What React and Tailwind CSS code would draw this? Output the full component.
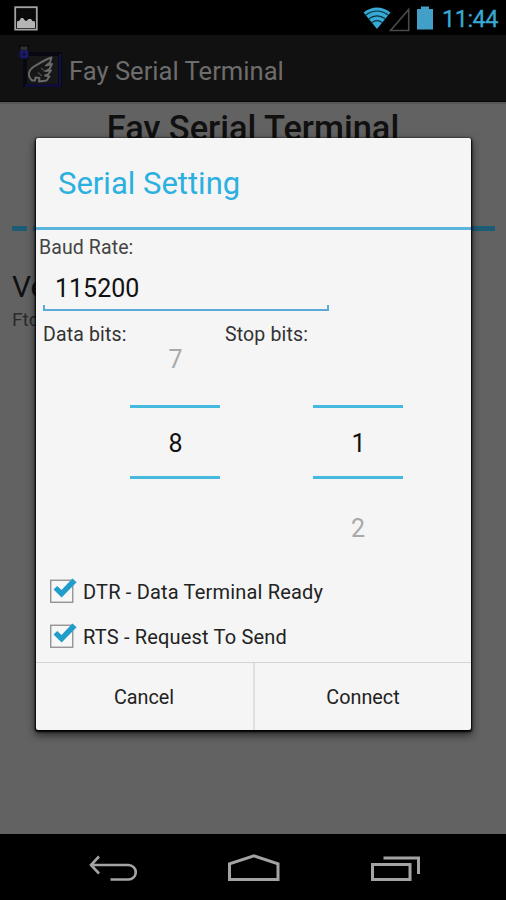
import React, { useState } from "react";

const StatusBar = () => (
  <div className="flex h-[35px] items-center justify-between bg-black pl-[14px] pr-2">
    {/* Picture notification */}
    <svg width="24" height="25" viewBox="0 0 24 25" className="mt-0.5">
      <rect x="1.2" y="1.2" width="21.6" height="22.4" fill="#0a0a0a" stroke="#a3a3a3" strokeWidth="1.8" />
      <path d="M3 22V15.500l2.500-1 1.500-2.500h2l2 2.500 1.500.5 2-2h2.500l1.500 2 2.500.5V22z" fill="#b5b5b5" />
    </svg>

    <div className="flex items-center">
      <svg width="48" height="26" viewBox="0 0 48 26" className="mt-0.5">
        {/* Wifi */}
        <path d="M.5 6.500Q14 -3.500 27.500 6.500L14 23z" fill="#38a8d4" />
        <path d="M2.800 9Q14 1 25.200 9M5.800 12.800Q14 6.800 22.200 12.800M8.800 16.600Q14 12.800 19.200 16.600" fill="none" stroke="#06303f" strokeWidth="1.2" />
        {/* No signal */}
        <path d="M27.500 24.5L45.7 3.5V24.5z" fill="none" stroke="#4a4a4a" strokeWidth="1.6" />
      </svg>
      <svg width="16" height="24" viewBox="0 0 16 24" className="ml-[6px] mr-[9px]">
        <path d="M0 3H4V.5H12V3H16V23.5H0z" fill="#429fc7" />
      </svg>
      <span className="mt-[2px] w-[56px] text-[23.5px] leading-[34px] tracking-[-0.5px] text-[#38a8d4] [-webkit-text-stroke:0.3px_#38a8d4]">11:44</span>
    </div>
  </div>
);

const AppIcon = () => (
  <svg width="46" height="46" viewBox="0 0 46 46">
    <rect x="5" y="7" width="39" height="35" rx="1" fill="#080811" />
    <path d="M7 40.5H43M42 9V40" stroke="#11104a" strokeWidth="2" fill="none" />
    <rect x="9" y="11" width="31" height="28" fill="#161716" />
    {/* Wing */}
    <path
      d="M14 35.500C9 30.500 10.500 25 16 21.500C21.500 18.500 26 15 33.500 12.500L32 17.500L28 20.500L34 19L31.500 24L27.500 26L33 25.500L30 29.500L27 30.500L31.500 31.500L28.500 35.500L21 36.500L21.500 33L17.500 32.500L17 35.500z"
      fill="none"
      stroke="#696969"
      strokeWidth="1.900"
      strokeLinejoin="round"
    />
    <path d="M20 27.500L24 31M23 23L27 26.500" stroke="#4c4c4c" strokeWidth="1.200" />
    {/* USB plug */}
    <rect x="1" y="0" width="10" height="14" rx="1" fill="#08080d" />
    <path d="M2.500 1.500H9.500V5.500H2.500z" fill="#303034" />
    <path d="M1.500 5.500H10.500V12.500L9 13.500H3L1.500 12.500z" fill="#1b1963" />
    <circle cx="6" cy="9.500" r="1.300" fill="#0a0a2b" />
  </svg>
);

const NumberPicker = ({ previous, value, next }) => (
  <div className="flex h-[253px] w-[90px] flex-col text-center text-[25px] text-[#a9a9a9]">
    <div className="h-[88px] pl-px leading-[86px]">{previous}</div>
    <div className="h-[74px] border-y-[3px] border-[#45b9de] pl-px leading-[72px] text-[#111]">{value}</div>
    <div className="h-[91px] leading-[99px]">{next}</div>
  </div>
);

const CheckRow = ({ label }) => {
  const [checked, setChecked] = useState(true);

  return (
    <button className="flex h-[45px] items-center pl-[14px]" onClick={() => setChecked(!checked)}>
      <svg width="28" height="28" viewBox="0 0 28 28" className="-mt-[3px]">
        <rect x=".75" y="3.250" width="22" height="22" fill="#f7f7f7" stroke="#8c8c8c" strokeWidth="1.300" />
        {checked && <path d="M3.500 12.500L7.200 9L11.500 13L22.400 1.500L26.600 5.200L11.600 20.600z" fill="#219dcc" />}
      </svg>
      <span className="ml-[5px] text-[20px] leading-[45px] tracking-[0.18px] text-[#222]">{label}</span>
    </button>
  );
};

const SerialDialog = () => (
  <div className="absolute left-[36px] top-[138px] flex h-[592px] w-[435px] flex-col rounded-[2px] bg-[#f5f5f5] shadow-[0_1px_2px_1px_#000,0_4px_8px_1px_rgba(0,0,0,0.6)]">
    <h2 className="h-[89px] shrink-0 pl-[22px] text-[31px] leading-[92px] text-[#2bb0df]">Serial Setting</h2>
    <div className="h-[3px] shrink-0 bg-[#5ab4db]" />

    <label className="h-[35px] shrink-0 pl-[3px] text-[19.5px] leading-[36px] tracking-[0.1px] text-[#444]">Baud Rate:</label>
    <div className="ml-[7px] flex h-[46px] w-[286px] shrink-0 flex-col justify-end">
      <span className="h-[40px] pl-[12px] text-[25px] leading-[47px] text-[#111]">115200</span>
      <div className="h-[6px] border-x-2 border-b-2 border-[#5aa9d6]" />
    </div>

    {/* Data and stop bits */}
    <div className="flex h-[259px] shrink-0 pt-[6px]">
      <span className="w-[87px] pl-[7px] text-[19.5px] leading-[35px] tracking-[0.15px] whitespace-nowrap text-[#333]">Data bits:</span>
      <div className="ml-[7px]">
        <NumberPicker previous="7" value="8" />
      </div>
      <span className="ml-[5px] w-[88px] text-[19.5px] leading-[35px] tracking-[0.15px] whitespace-nowrap text-[#333]">Stop bits:</span>
      <NumberPicker value="1" next="2" />
    </div>

    <div className="flex h-[92px] shrink-0 flex-col items-start">
      <CheckRow label="DTR - Data Terminal Ready" />
      <CheckRow label="RTS - Request To Send" />
    </div>

    <div className="flex flex-1 border-t border-[#d4d4d4] text-[19.8px] leading-[24px] text-[#222]">
      <button className="w-[217px] pr-px pt-[2px]">Cancel</button>
      <div className="w-[2px] bg-[#e0e0e0]" />
      <button className="flex-1 pt-[2px]">Connect</button>
    </div>
  </div>
);

const NavBar = () => (
  <div className="flex h-[66px] items-center justify-between bg-black pl-[87px] pr-[85px] pt-1">
    <svg width="50" height="30" viewBox="0 0 50 30" fill="none" stroke="#a3a3a3" strokeWidth="2.600">
      <path d="M12 2.500L4 11L12 19.500M4 11H41.500A7.250 7.250 0 0 1 41.500 25.500H23.500" />
    </svg>
    <svg width="54" height="30" viewBox="0 0 54 30" fill="none" stroke="#a3a3a3" strokeWidth="3">
      <path d="M2.500 25.500V9.800L27 1.800L51 9.800V25.500z" />
    </svg>
    <svg width="50" height="30" viewBox="0 0 50 30" fill="none" stroke="#a3a3a3" strokeWidth="3">
      <path d="M1.500 10.500H39V25.500H1.500zM12.500 4H47.500V20" />
    </svg>
  </div>
);

const App = () => (
  <div className="relative flex h-[900px] w-[506px] flex-col overflow-hidden bg-[#626262] font-['Roboto',sans-serif]">
    <StatusBar />

    <header className="flex h-[67px] items-center border-b border-[#080808] bg-[#111] pl-[18px]">
      <AppIcon />
      <h1 className="ml-[5px] mt-[5px] text-[25.6px] leading-[40px] text-[#6d6d6d]">Fay Serial Terminal</h1>
    </header>

    {/* Dimmed page under the dialog */}
    <main className="flex-1 border-t-2 border-[#555] px-3">
      <h2 className="h-[122px] text-center text-[34.4px] font-medium leading-[48px] text-[#101010]">Fay Serial Terminal</h2>
      <div className="mr-[-1px] flex h-[5px] gap-[6px]">
        <div className="w-[15px] bg-[#1c5d75]" />
        <div className="flex-1 bg-[#1c5d75]" />
      </div>
      <p className="mt-[36px] text-[30px] leading-[40px] text-[#101010]">Ve</p>
      <p className="text-[19px] leading-[26px] text-[#2b2b2b]">Ftd</p>
    </main>

    <NavBar />
    <SerialDialog />
  </div>
);

export default App;
